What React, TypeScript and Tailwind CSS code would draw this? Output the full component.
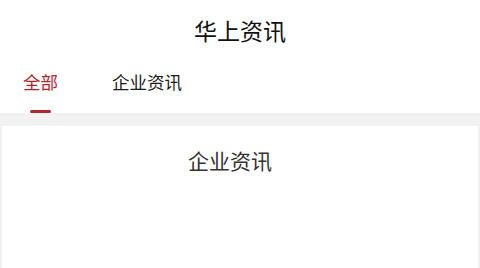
import React from "react";

export default function App() {
  return (
    <div
      className="w-[480px] h-[268px] bg-white overflow-hidden flex flex-col"
      style={{ fontFamily: '"Noto Sans CJK SC", "Noto Sans", sans-serif' }}
    >
      <div className="h-[60px] flex items-center justify-center shrink-0">
        <span className="text-[23px] leading-[26px] text-[#111] font-normal">华上资讯</span>
      </div>
      <div className="h-[53px] flex pl-[23px] gap-[54px] shrink-0">
        <div className="flex flex-col items-center">
          <span className="mt-[12px] text-[17.5px] leading-[20px] text-[#b3262e]">全部</span>
          <div className="mt-[18px] h-[2.5px] w-[21px] bg-[#b3262e] rounded-full" />
        </div>
        <div className="flex flex-col items-center">
          <span className="mt-[12px] text-[17.5px] leading-[20px] text-[#1a1a1a]">企业资讯</span>
        </div>
      </div>
      <div className="flex-1 bg-[#f2f2f2] pt-[13px] px-[2px] flex flex-col">
        <div className="flex-1 bg-white flex justify-center pt-[22px] pr-[20px]">
          <span className="text-[21px] leading-[24px] text-[#333]">企业资讯</span>
        </div>
      </div>
    </div>
  );
}
